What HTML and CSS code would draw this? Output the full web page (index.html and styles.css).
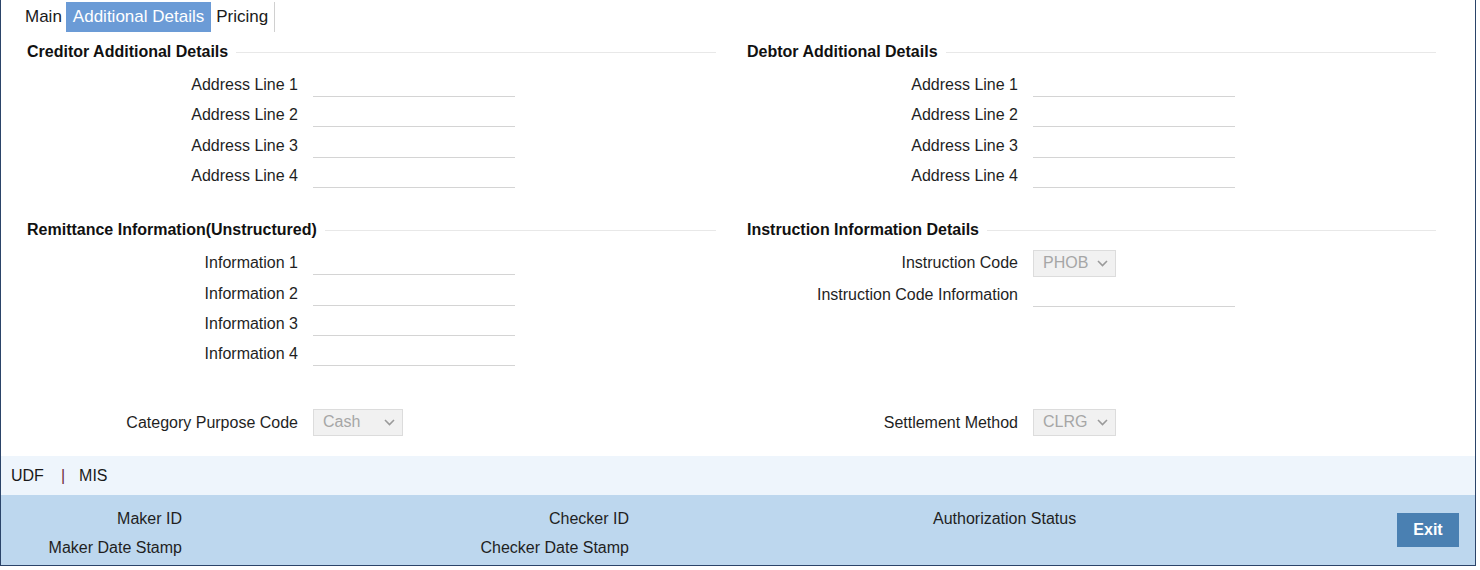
FILE: index.html
```html
<!DOCTYPE html>
<html>
<head>
<meta charset="utf-8">
<link rel="stylesheet" href="styles.css">
</head>
<body>
<div class="frame">
  <div class="tabs">
    <div class="tab first">Main</div>
    <div class="tab active">Additional Details</div>
    <div class="tab last">Pricing</div>
  </div>

  <div class="grid">
    <div class="col">
      <section class="sec">
        <h3 class="head"><span>Creditor Additional Details</span></h3>
        <div class="row"><label>Address Line 1</label><div class="inp"></div></div>
        <div class="row"><label>Address Line 2</label><div class="inp"></div></div>
        <div class="row"><label>Address Line 3</label><div class="inp"></div></div>
        <div class="row"><label>Address Line 4</label><div class="inp"></div></div>
      </section>
      <section class="sec sec2">
        <h3 class="head"><span>Remittance Information(Unstructured)</span></h3>
        <div class="row"><label>Information 1</label><div class="inp"></div></div>
        <div class="row"><label>Information 2</label><div class="inp"></div></div>
        <div class="row"><label>Information 3</label><div class="inp"></div></div>
        <div class="row"><label>Information 4</label><div class="inp"></div></div>
      </section>
      <div class="row solo"><label>Category Purpose Code</label>
        <div class="sel w89"><span>Cash</span><svg width="11" height="7" viewBox="0 0 11 7"><polyline points="1,1 5.5,5.5 10,1" fill="none" stroke="#9a9a9a" stroke-width="1.6"/></svg></div>
      </div>
    </div>
    <div class="col">
      <section class="sec">
        <h3 class="head"><span>Debtor Additional Details</span></h3>
        <div class="row"><label>Address Line 1</label><div class="inp"></div></div>
        <div class="row"><label>Address Line 2</label><div class="inp"></div></div>
        <div class="row"><label>Address Line 3</label><div class="inp"></div></div>
        <div class="row"><label>Address Line 4</label><div class="inp"></div></div>
      </section>
      <section class="sec sec2">
        <h3 class="head"><span>Instruction Information Details</span></h3>
        <div class="row tall"><label>Instruction Code</label>
          <div class="sel w83"><span>PHOB</span><svg width="11" height="7" viewBox="0 0 11 7"><polyline points="1,1 5.5,5.5 10,1" fill="none" stroke="#9a9a9a" stroke-width="1.6"/></svg></div>
        </div>
        <div class="row"><label>Instruction Code Information</label><div class="inp"></div></div>
        <div class="filler"></div>
      </section>
      <div class="row solo"><label>Settlement Method</label>
        <div class="sel w83"><span>CLRG</span><svg width="11" height="7" viewBox="0 0 11 7"><polyline points="1,1 5.5,5.5 10,1" fill="none" stroke="#9a9a9a" stroke-width="1.6"/></svg></div>
      </div>
    </div>
  </div>

  <div class="band">
    <span>UDF</span><span class="pipe">|</span><span>MIS</span>
  </div>

  <div class="footer">
    <div class="audit">
      <div class="lab r">Maker ID</div><div></div><div class="lab r">Checker ID</div><div></div><div class="lab">Authorization Status</div>
      <div class="lab r">Maker Date Stamp</div><div></div><div class="lab r">Checker Date Stamp</div><div></div><div></div>
    </div>
    <button class="exit">Exit</button>
  </div>
</div>
</body>
</html>
```

FILE: styles.css
```css
* { box-sizing: border-box; }
html, body { margin: 0; padding: 0; background: #fff; }
body {
  font-family: Arial, "Liberation Sans", sans-serif;
  font-size: 16px;
  color: #222;
}
.frame {
  width: 1476px;
  height: 566px;
  border: 1px solid #2b4469;
  border-top: none;
  display: flex;
  flex-direction: column;
}
.tabs {
  display: flex;
  padding-top: 2px;
  padding-left: 21px;
  height: 32px;
  font-size: 17px;
}
.tab {
  height: 30px;
  line-height: 30px;
  padding: 0 7px;
  color: #1a1a1a;
}
.tab.first { padding: 0 4px 0 3px; }
.tab.active {
  background: #6b9bd6;
  color: #fff;
}
.tab.last {
  border-right: 1px solid #d0d0d0;
  padding: 0 6px 0 5px;
}
.grid {
  display: grid;
  grid-template-columns: 720px 720px;
  padding-left: 26px;
  padding-top: 10px;
}
.col { padding-right: 31px; }
.head {
  margin: 0 0 7px 0;
  height: 20px;
  line-height: 20px;
  font-size: 16px;
  font-weight: bold;
  color: #111;
  display: flex;
  align-items: center;
}
.head::after {
  content: "";
  flex: 1;
  height: 1px;
  background: #e8e8e8;
  margin-left: 8px;
}
.sec2 { margin-top: 30px; }
.row {
  display: flex;
  align-items: flex-start;
  height: 30.33px;
}
.row.tall { height: 32px; align-items: center; }
.filler { height: 59px; }
.row label {
  width: 271px;
  text-align: right;
  line-height: 30px;
  padding-top: 1px;
  color: #1f1f1f;
}
.row.tall label { line-height: 32px; padding-top: 0; }
.inp {
  margin-left: 15px;
  width: 202px;
  height: 28px;
  border-bottom: 1px solid #d4d4d4;
}
.sel {
  margin-left: 15px;
  height: 27px;
  background: #f1f1f1;
  border: 1px solid #dcdcdc;
  display: flex;
  align-items: center;
  justify-content: space-between;
  padding: 0 7px 0 9px;
  color: #a6a6a6;
}
.sel svg { display: block; }
.w89 { width: 90px; }
.w83 { width: 83px; }
.row.solo {
  margin-top: 38.4px;
  height: 30px;
  align-items: center;
}
.row.solo label { line-height: 30px; padding-top: 2px; }
.band {
  margin-top: 19px;
  height: 39px;
  background: #eef5fc;
  display: flex;
  align-items: center;
  padding-left: 10px;
  color: #1a1a1a;
}
.pipe {
  color: #6e2a3c;
  margin: 0 14px 0 17px;
}
.footer {
  flex: 1;
  background: #bdd7ee;
  display: flex;
  align-items: center;
  padding-right: 16px;
}
.audit {
  flex: 1;
  align-self: flex-start;
  padding-top: 9px;
  display: grid;
  grid-template-columns: 181px 267px 180px 304px 1fr;
  grid-auto-rows: 29px;
}
.lab {
  line-height: 29px;
  color: #1f1f1f;
  white-space: nowrap;
}
.lab.r { text-align: right; }
.exit {
  width: 62px;
  height: 34px;
  background: #4a80b2;
  color: #fff;
  border: none;
  font-family: Arial, "Liberation Sans", sans-serif;
  font-size: 16px;
  font-weight: bold;
  padding: 0;
}
```
